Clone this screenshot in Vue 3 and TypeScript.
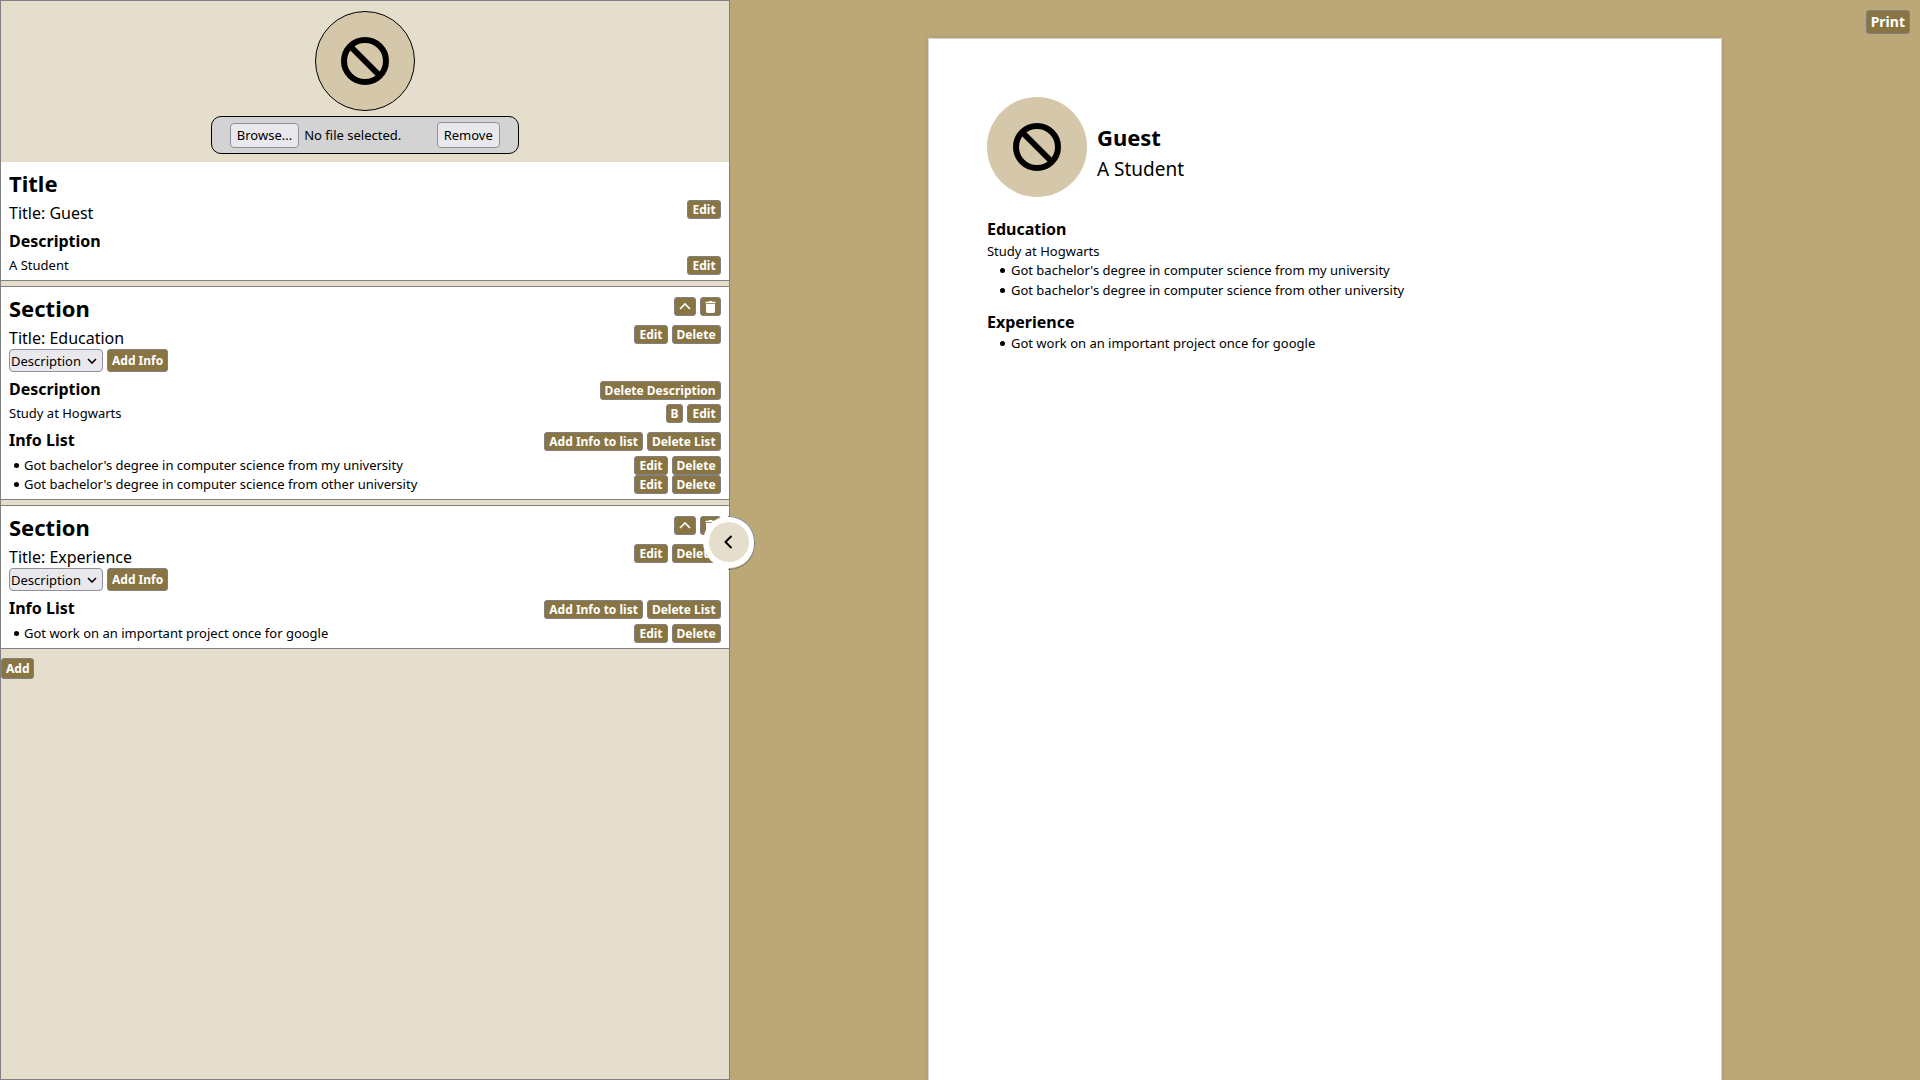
<script setup lang="ts">
import { computed, ref } from 'vue'

interface Section {
  id: number
  title: string
  description: string | null
  items: string[]
  kind: string
}

const name = ref('Guest')
const tagline = ref('A Student')
const open = ref(true)
const file = ref<File | null>(null)
const fileInput = ref<HTMLInputElement | null>(null)

const sections = ref<Section[]>([
  {
    id: 1,
    title: 'Education',
    description: 'Study at Hogwarts',
    items: [
      "Got bachelor's degree in computer science from my university",
      "Got bachelor's degree in computer science from other university",
    ],
    kind: 'Description',
  },
  {
    id: 2,
    title: 'Experience',
    description: null,
    items: ['Got work on an important project once for google'],
    kind: 'Description',
  },
])

const fileLabel = computed(() => (file.value ? file.value.name : 'No file selected.'))

function pickFile(event: Event) {
  file.value = (event.target as HTMLInputElement).files?.[0] ?? null
}

function clearFile() {
  file.value = null
  if (fileInput.value) fileInput.value.value = ''
}

function addInfo(section: Section) {
  if (section.kind === 'Description') section.description = section.description ?? 'Description'
  else section.items.push('Info')
}

function moveUp(index: number) {
  if (index === 0) return
  const [moved] = sections.value.splice(index, 1)
  sections.value.splice(index - 1, 0, moved)
}

function addSection() {
  sections.value.push({ id: Date.now(), title: 'Title', description: null, items: [], kind: 'Description' })
}

function printPage() {
  window.print()
}
</script>

<template>
  <div class="app">
    <aside class="panel" :class="{ closed: !open }">
      <div class="photo">
        <div class="avatar outlined">
          <svg viewBox="0 0 48 48" aria-hidden="true">
            <circle cx="24" cy="24" r="21" />
            <path d="M9.5 9.5 38.5 38.5" />
          </svg>
        </div>
        <div class="file-bar">
          <label class="file">
            <input ref="fileInput" type="file" accept="image/*" @change="pickFile" />
            <span class="native browse">Browse...</span>
            <span>{{ fileLabel }}</span>
          </label>
          <button type="button" class="native" @click="clearFile">Remove</button>
        </div>
      </div>

      <section class="card first">
        <div class="row head"><h2>Title</h2></div>
        <div class="row title">
          <p>Title: {{ name }}</p>
          <div class="actions"><button type="button" class="btn">Edit</button></div>
        </div>
        <div class="row sub"><h3>Description</h3></div>
        <div class="row text">
          <p>{{ tagline }}</p>
          <div class="actions"><button type="button" class="btn">Edit</button></div>
        </div>
      </section>

      <section v-for="(section, index) in sections" :key="section.id" class="card">
        <div class="row head">
          <h2>Section</h2>
          <div class="actions">
            <button type="button" class="btn icon" aria-label="Move up" @click="moveUp(index)">
              <svg viewBox="0 0 12 12" aria-hidden="true"><path class="line" d="M1 8 6 3 11 8" /></svg>
            </button>
            <button type="button" class="btn icon" aria-label="Delete section" @click="sections.splice(index, 1)">
              <svg class="trash" viewBox="0 0 11 12" aria-hidden="true">
                <path class="solid" d="M.5 .8h3L4 0h3l.5.8h3v1.500H.5zM1 3h9v7.600Q10 12 8.700 12H2.300Q1 12 1 10.600z" />
              </svg>
            </button>
          </div>
        </div>
        <div class="row title">
          <p>Title: {{ section.title }}</p>
          <div class="actions">
            <button type="button" class="btn">Edit</button>
            <button type="button" class="btn">Delete</button>
          </div>
        </div>
        <div class="adder">
          <div class="select">
            <select v-model="section.kind" aria-label="Kind of info">
              <option>Description</option>
              <option>Info List</option>
            </select>
            <svg viewBox="0 0 10 6" aria-hidden="true"><path d="M1 1 5 5 9 1" /></svg>
          </div>
          <button type="button" class="btn tall" @click="addInfo(section)">Add Info</button>
        </div>
        <template v-if="section.description !== null">
          <div class="row sub">
            <h3>Description</h3>
            <div class="actions">
              <button type="button" class="btn" @click="section.description = null">Delete Description</button>
            </div>
          </div>
          <div class="row text">
            <p>{{ section.description }}</p>
            <div class="actions">
              <button type="button" class="btn">B</button>
              <button type="button" class="btn">Edit</button>
            </div>
          </div>
        </template>
        <template v-if="section.items.length">
          <div class="row sub">
            <h3>Info List</h3>
            <div class="actions">
              <button type="button" class="btn" @click="section.items.push('Info')">Add Info to list</button>
              <button type="button" class="btn" @click="section.items = []">Delete List</button>
            </div>
          </div>
          <ul class="items">
            <li v-for="(item, i) in section.items" :key="i" class="row text">
              <p>{{ item }}</p>
              <div class="actions">
                <button type="button" class="btn">Edit</button>
                <button type="button" class="btn" @click="section.items.splice(i, 1)">Delete</button>
              </div>
            </li>
          </ul>
        </template>
      </section>

      <button type="button" class="btn add" @click="addSection">Add</button>

      <button type="button" class="toggle" aria-label="Toggle editor" @click="open = !open">
        <span><svg viewBox="0 0 10 16" aria-hidden="true"><path d="M7.500 2 1.500 8l6 6" /></svg></span>
      </button>
    </aside>

    <main class="preview">
      <button type="button" class="btn print" @click="printPage">Print</button>
      <article class="paper">
        <header class="intro">
          <div class="avatar">
            <svg viewBox="0 0 48 48" aria-hidden="true">
              <circle cx="24" cy="24" r="21" />
              <path d="M9.5 9.5 38.5 38.5" />
            </svg>
          </div>
          <div class="who">
            <h1>{{ name }}</h1>
            <p>{{ tagline }}</p>
          </div>
        </header>
        <section v-for="section in sections" :key="section.id" class="entry">
          <h2>{{ section.title }}</h2>
          <p v-if="section.description">{{ section.description }}</p>
          <ul>
            <li v-for="(item, i) in section.items" :key="i">{{ item }}</li>
          </ul>
        </section>
      </article>
    </main>
  </div>
</template>

<style>
body {
  margin: 0;
}
</style>

<style scoped>
* {
  box-sizing: border-box;
}

.app {
  display: flex;
  height: 100vh;
  overflow: hidden;
  background: #bca876;
  color: #000;
  font: 13px/19px "Noto Sans", sans-serif;
}

h1,
h2,
h3,
p,
ul {
  margin: 0;
  padding: 0;
}

button,
select {
  font-family: inherit;
}

.panel {
  position: relative;
  flex: 0 0 38%;
  border: 1px solid #808080;
  background: #e5decc;
}

.photo {
  display: flex;
  flex-direction: column;
  align-items: center;
  gap: 5px;
  padding: 10px 0 8px;
}

.avatar {
  display: grid;
  place-items: center;
  width: 100px;
  height: 100px;
  border-radius: 50%;
  background: #d5c7aa;
}

.avatar.outlined {
  border: 1px solid #000;
}

.avatar svg {
  width: 48px;
  height: 48px;
  fill: none;
  stroke: #000;
  stroke-width: 6;
}

.file-bar {
  display: flex;
  justify-content: space-between;
  align-items: flex-end;
  width: 308px;
  height: 38px;
  padding: 0 18px 5px;
  border: 1px solid #000;
  border-radius: 10px;
  background: #d3d3d3;
}

.file {
  position: relative;
  display: flex;
  align-items: center;
  gap: 5px;
}

.file input {
  position: absolute;
  inset: 0;
  width: 100%;
  opacity: 0;
}

.native {
  padding: 0 6px;
  border: 1px solid #8f8f9d;
  border-radius: 4px;
  background: #e9e9ed;
  color: #000;
  font-size: 13px;
  line-height: 24px;
}

.native.browse {
  line-height: 23px;
}

.card {
  margin-top: 5px;
  padding: 10px 8px 5px;
  border: solid #808080;
  border-width: 1px 0;
  background: #fff;
}

.card.first {
  margin-top: 0;
  border-top: 0;
}

.row {
  display: flex;
  justify-content: space-between;
}

.actions {
  display: flex;
  gap: 4px;
}

.head {
  align-items: flex-start;
  height: 22px;
  margin-bottom: 6px;
}

.head h2 {
  font-size: 22px;
  line-height: 22px;
}

.title {
  align-items: flex-start;
  height: 24px;
  font-size: 16px;
  line-height: 26px;
}

.sub {
  align-items: flex-end;
  margin: 6px 0 4px;
}

.sub h3 {
  font-size: 16px;
  line-height: 22px;
}

.items {
  margin-top: 5px;
  list-style: none;
}

.items p {
  display: flex;
  align-items: center;
  gap: 5px;
  padding-left: 5px;
}

.items p::before,
.entry li::before {
  width: 5px;
  height: 5px;
  border-radius: 50%;
  background: #000;
  content: "";
}

.btn {
  height: 19px;
  padding: 0 4px;
  border: 1px solid #808080;
  border-radius: 3px;
  background: #887543;
  color: #fff;
  font-size: 12px;
  font-weight: 700;
  line-height: 17px;
}

.btn.icon {
  display: grid;
  place-items: center;
}

.icon svg {
  width: 12px;
  height: 12px;
}

.icon .trash {
  width: 11px;
}

.icon .line {
  fill: none;
  stroke: #fff;
  stroke-width: 1.6;
}

.icon .solid {
  fill: #fff;
}

.btn.tall {
  height: 23px;
  line-height: 21px;
}

.btn.add {
  display: block;
  height: 21px;
  margin-top: 9px;
}

.adder {
  display: flex;
  gap: 4px;
}

.select {
  position: relative;
}

.select select {
  display: block;
  width: 94px;
  height: 23px;
  padding: 0 1px;
  border: 1px solid #8f8f9d;
  border-radius: 4px;
  background: #e9e9ed;
  color: #000;
  font-size: 13px;
  appearance: none;
}

.select svg {
  position: absolute;
  top: 9px;
  right: 6px;
  width: 10px;
  height: 6px;
  fill: none;
  stroke: #000;
  stroke-width: 1.6;
  pointer-events: none;
}

.toggle {
  position: absolute;
  top: 50%;
  right: -26px;
  display: grid;
  place-items: center;
  width: 52px;
  height: 52px;
  margin-top: -24px;
  padding: 0;
  border: 0;
  border-radius: 50%;
  background: #fff;
}

.toggle::before {
  position: absolute;
  top: 0;
  right: 0;
  width: 26px;
  height: 52px;
  border: 1px solid #808080;
  border-left: 0;
  border-radius: 0 26px 26px 0;
  content: "";
}

.toggle span {
  display: grid;
  place-items: center;
  width: 40px;
  height: 40px;
  border-radius: 50%;
  background: #e5decc;
}

.toggle svg {
  width: 10px;
  height: 16px;
  fill: none;
  stroke: #000;
  stroke-width: 2;
}

.preview {
  position: relative;
  flex: 1;
  overflow: hidden;
  padding-top: 38px;
}

.btn.print {
  position: absolute;
  top: 10px;
  right: 10px;
  height: 24px;
  font-size: 14px;
  line-height: 22px;
}

.paper {
  width: 210mm;
  min-height: 297mm;
  margin: 0 auto;
  padding: 58px;
  border: 1px solid #d3d3d3;
  background: #fff;
  box-shadow: 0 0 5px rgba(0, 0, 0, 0.1);
}

.intro {
  display: flex;
  align-items: center;
  gap: 10px;
  margin-bottom: 21px;
}

.who {
  display: flex;
  flex-direction: column;
  gap: 2px;
  padding-top: 12px;
  line-height: 30px;
}

.who h1 {
  font-size: 22px;
}

.who p {
  font-size: 19px;
}

.entry {
  margin-bottom: 11px;
}

.entry h2 {
  font-size: 16px;
  line-height: 22px;
}

.entry p {
  margin-top: 2px;
  line-height: 18px;
}

.entry ul {
  padding-left: 13px;
  line-height: 20px;
  list-style: none;
}

.entry li {
  display: flex;
  align-items: center;
  gap: 6px;
}
</style>
